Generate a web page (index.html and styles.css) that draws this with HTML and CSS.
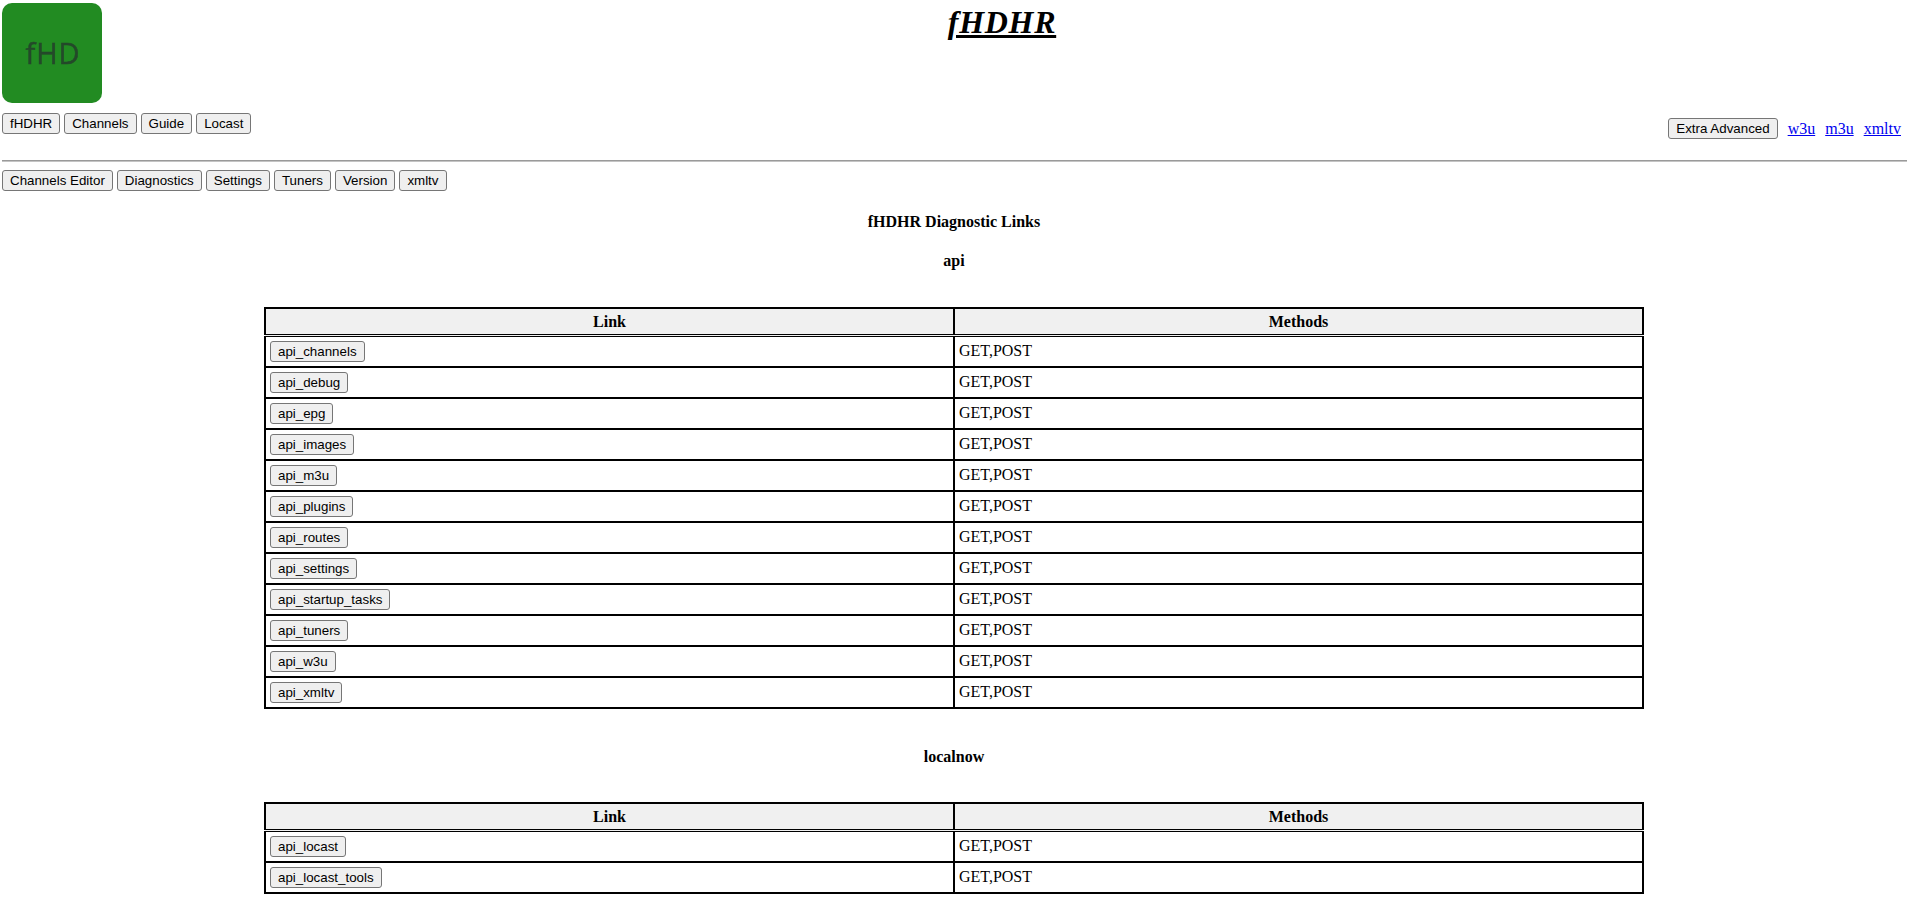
FILE: index.html
```html
<!DOCTYPE html>
<html lang="en">
<head>
<meta charset="utf-8">
<title>fHDHR</title>
<link rel="stylesheet" href="styles.css">
</head>
<body>
<header class="masthead">
  <svg class="logo" viewBox="0 0 100 100" width="100" height="100" aria-label="fHDHR logo">
    <rect width="100" height="100" rx="10" fill="#228b22"/>
    <text x="51" y="61" text-anchor="middle" class="logo-text">fHD</text>
  </svg>
  <h1 class="title">fHDHR</h1>
</header>
<nav class="nav-main">
  <div class="btn-row">
    <button class="btn">fHDHR</button><button class="btn">Channels</button><button class="btn">Guide</button><button class="btn">Locast</button>
  </div>
  <div class="nav-right">
    <button class="btn">Extra Advanced</button>
    <a href="#">w3u</a><a href="#">m3u</a><a href="#">xmltv</a>
  </div>
</nav>
<hr class="rule">
<nav class="btn-row">
  <button class="btn">Channels Editor</button><button class="btn">Diagnostics</button><button class="btn">Settings</button><button class="btn">Tuners</button><button class="btn">Version</button><button class="btn">xmltv</button>
</nav>
<main>
  <h4 class="page-heading">fHDHR Diagnostic Links</h4>
  <h4 class="section-heading">api</h4>
  <table class="links">
    <thead><tr><th>Link</th><th>Methods</th></tr></thead>
    <tbody>
      <tr><td><button class="btn">api_channels</button></td><td>GET,POST</td></tr>
      <tr><td><button class="btn">api_debug</button></td><td>GET,POST</td></tr>
      <tr><td><button class="btn">api_epg</button></td><td>GET,POST</td></tr>
      <tr><td><button class="btn">api_images</button></td><td>GET,POST</td></tr>
      <tr><td><button class="btn">api_m3u</button></td><td>GET,POST</td></tr>
      <tr><td><button class="btn">api_plugins</button></td><td>GET,POST</td></tr>
      <tr><td><button class="btn">api_routes</button></td><td>GET,POST</td></tr>
      <tr><td><button class="btn">api_settings</button></td><td>GET,POST</td></tr>
      <tr><td><button class="btn">api_startup_tasks</button></td><td>GET,POST</td></tr>
      <tr><td><button class="btn">api_tuners</button></td><td>GET,POST</td></tr>
      <tr><td><button class="btn">api_w3u</button></td><td>GET,POST</td></tr>
      <tr><td><button class="btn">api_xmltv</button></td><td>GET,POST</td></tr>
    </tbody>
  </table>
  <h4 class="section-heading second">localnow</h4>
  <table class="links">
    <thead><tr><th>Link</th><th>Methods</th></tr></thead>
    <tbody>
      <tr><td><button class="btn">api_locast</button></td><td>GET,POST</td></tr>
      <tr><td><button class="btn">api_locast_tools</button></td><td>GET,POST</td></tr>
    </tbody>
  </table>
</main>
</body>
</html>
```
FILE: styles.css
```css
html, body {
  height: 901px;
  overflow: hidden;
}
body {
  margin: 0;
  padding: 3px 2px 0;
  box-sizing: border-box;
  background: #fff;
  color: #000;
  font-family: "Liberation Serif", "Times New Roman", serif;
  font-size: 16px;
}
.masthead {
  display: flex;
  height: 100px;
}
.logo {
  flex: none;
  display: block;
}
.logo-text {
  font-family: "Open Sans", sans-serif;
  font-size: 29px;
  letter-spacing: 1px;
  fill: #24492a;
  stroke: #24492a;
  stroke-width: 0.5px;
  filter: blur(0.6px);
}
.title {
  flex: 1;
  margin: 1px 0 0;
  padding-right: 4px;
  text-align: center;
  font-size: 32px;
  font-style: italic;
  letter-spacing: 0.7px;
  text-decoration: underline;
}
.btn-row {
  display: flex;
  gap: 4px;
}
.btn {
  height: 21px;
  padding: 1px 7px;
  border: 1px solid #767676;
  border-radius: 3px;
  background: #efefef;
  color: #000;
  font-family: "Liberation Sans", Arial, sans-serif;
  font-size: 13.333px;
}
.nav-main {
  display: flex;
  justify-content: space-between;
  margin-top: 10px;
}
.nav-right {
  display: flex;
  align-items: center;
  gap: 10px;
  margin-top: 5px;
  padding-right: 5px;
}
.nav-right a {
  color: #00e;
}
.rule {
  margin: 21px -1px 8px 0;
  border: 0;
  border-top: 1px solid #9a9a9a;
  border-bottom: 1px solid #c4c4c4;
}
.page-heading, .section-heading {
  margin: 0;
  text-align: center;
  font-size: 16px;
}
.page-heading {
  margin-top: 22px;
}
.section-heading {
  margin-top: 21px;
}
.section-heading.second {
  margin-top: 39px;
}
.links {
  width: 1380px;
  margin: 37px auto 0;
  border-collapse: collapse;
  table-layout: fixed;
}
.section-heading.second + .links {
  margin-top: 36px;
}
.links th, .links td {
  border: 2px solid #000;
  padding: 2px 4px;
  text-align: left;
}
.links th {
  background: #f0f0f0;
  text-align: center;
  border-bottom: 3px double #000;
  height: 21px;
}
.links td {
  height: 25px;
}
.links td:last-child {
  height: 24px;
  padding: 5px 4px 0;
  vertical-align: top;
}
```
